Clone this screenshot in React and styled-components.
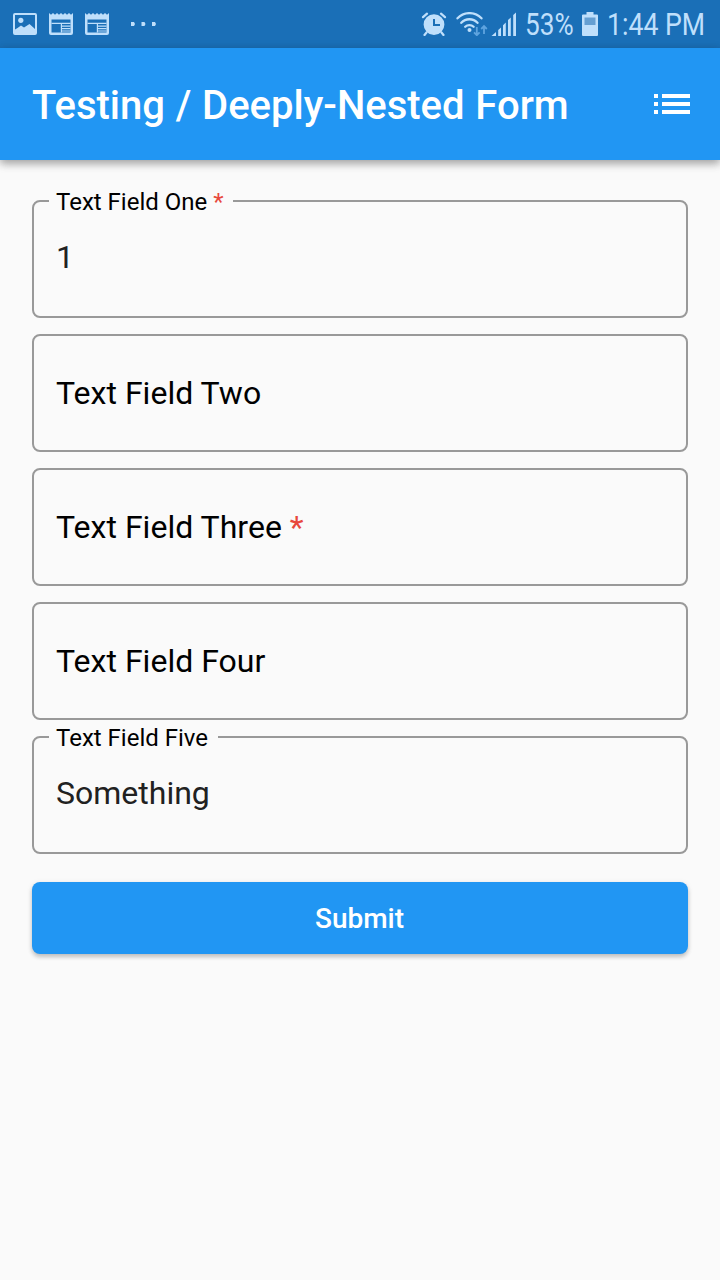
import styled, { createGlobalStyle } from 'styled-components';

const fields = [
  { label: 'Text Field One', required: true, value: '1' },
  { label: 'Text Field Two' },
  { label: 'Text Field Three', required: true },
  { label: 'Text Field Four' },
  { label: 'Text Field Five', value: 'Something' },
];

const PhotoIcon = () => (
  <svg width="24" height="22" viewBox="0 0 24 22">
    <path
      fillRule="evenodd"
      d="M2 0h20a2 2 0 0 1 2 2v18a2 2 0 0 1-2 2H2a2 2 0 0 1-2-2V2a2 2 0 0 1 2-2zM2 2v14.500L4.500 15l3.500-2.500 3 2L16.500 11l5.500 5V2z"
    />
    <circle cx="7.800" cy="7.300" r="2.600" />
  </svg>
);

const NewsIcon = () => (
  <svg width="24" height="22" viewBox="0 0 24 22">
    <path
      fillRule="evenodd"
      d="M0 0l2 1.800 2-1.800 2 1.800 2-1.800 2 1.800 2-1.800 2 1.800 2-1.800 2 1.800 2-1.800 2 1.800 2-1.800v20a2 2 0 0 1-2 2H2a2 2 0 0 1-2-2zM2.500 6.500v13h19v-13z"
    />
    <path d="M2.500 9.800h19v1.200h-19zM11.800 10h1.200v9.500h-1.200zM13 12.600h8.500v1.200H13zM13 15h8.500v1.200H13zM13 17.400h8.500v1.200H13z" />
  </svg>
);

const AlarmIcon = () => (
  <svg width="26" height="24" viewBox="0 0 26 24">
    <path
      fillRule="evenodd"
      d="M13 2.200a10.400 10.400 0 1 1 0 20.800 10.400 10.400 0 0 1 0-20.800zM12 7v7h7v-2h-5V7z"
    />
    <path d="M2 5.200L6 1.700M24 5.200L20 1.700M5.500 20.500L3.500 23M20.500 20.500L22.500 23" stroke="currentColor" strokeWidth="2.200" strokeLinecap="round" />
  </svg>
);

const WifiIcon = () => (
  <svg width="32" height="24" viewBox="0 0 32 24">
    <g fill="none" stroke="currentColor" strokeWidth="2.300" strokeLinecap="round">
      <path d="M1.500 6.300a16.500 16.500 0 0 1 24 0M5.300 10.800a11 11 0 0 1 16.200 0M9.200 14.800a6 6 0 0 1 8.400 0" />
    </g>
    <circle cx="13.500" cy="18" r="2" />
    <g fill="none" stroke="#5fa4df" strokeWidth="1.800">
      <path d="M20.800 15v8M18 20.300l2.800 2.900 2.800-2.900M28 22v-8M25.200 17l2.800-2.900 2.800 2.900" />
    </g>
  </svg>
);

const SignalIcon = () => (
  <svg width="26" height="24" viewBox="0 0 26 24">
    <path d="M.5 24L5 20v4zM7.200 18l2.800-2.600V24H7.200zM12 13.200l2.800-2.600V24H12zM17 8l2.800-2.600V24H17zM22.200 3L25 .4V24h-2.800z" />
  </svg>
);

const BatteryIcon = () => (
  <svg width="16" height="24" viewBox="0 0 16 24">
    <path d="M4.500 0h7v2.500H15a1 1 0 0 1 1 1V23a1 1 0 0 1-1 1H1a1 1 0 0 1-1-1V3.500a1 1 0 0 1 1-1h3.500z" />
    <path d="M2.500 5.500h11V13h-11z" fill="#659fd2" />
  </svg>
);

const DotsIcon = () => (
  <svg width="26" height="4" viewBox="0 0 26 4">
    <path d="M0 0h3l1 2-1 2H0zM10.500 0h3l1 2-1 2h-3zM21 0h3l1 2-1 2h-3z" />
  </svg>
);

const ListIcon = () => (
  <svg width="36" height="20" viewBox="0 0 36 20">
    <path d="M0 0h4v4H0zM8 0h28v4H8zM0 8h4v4H0zM8 8h28v4H8zM0 16h4v4H0zM8 16h28v4H8z" />
  </svg>
);

const Field = ({ label, required, value }) => (
  <FieldBox>
    <Label $floating={!!value}>
      {label}
      {required && <Required> *</Required>}
    </Label>
    {value && <Value>{value}</Value>}
  </FieldBox>
);

export default () => (
  <Screen>
    <GlobalStyle />

    <StatusBar>
      <Notifications>
        <PhotoIcon />
        <NewsIcon />
        <NewsIcon />
        <More><DotsIcon /></More>
      </Notifications>
      <System>
        <AlarmIcon />
        <WifiIcon />
        <SignalIcon />
        <StatusText $width={48} $scale={.845}>53%</StatusText>
        <BatteryIcon />
        <StatusText $width={98} $scale={.86}>1:44 PM</StatusText>
      </System>
    </StatusBar>

    <AppBar>
      <Title>Testing / Deeply-Nested Form</Title>
      <MenuButton aria-label="Menu"><ListIcon /></MenuButton>
    </AppBar>

    <Form>
      {fields.map(field => <Field key={field.label} {...field} />)}
      <Submit type="button">Submit</Submit>
    </Form>
  </Screen>
)

const GlobalStyle = createGlobalStyle`
  * {
    box-sizing: border-box;
  }

  body {
    margin: 0;
    background: #fafafa;
    font-family: Roboto, sans-serif;
  }

  svg {
    display: block;
    flex: none;
    fill: currentColor;
  }
`;

const Screen = styled.div`
  display: flex;
  flex-direction: column;
  min-height: 1280px;
  background: #fafafa;
`;

const StatusBar = styled.div`
  display: flex;
  justify-content: space-between;
  align-items: center;
  height: 48px;
  padding: 0 15px 0 13px;
  background: #1a6fb7;
  color: #bfdffb;
`;

const Notifications = styled.div`
  display: flex;
  align-items: center;
  gap: 12px;
`;

const More = styled.div`
  margin-left: 10px;
`;

const System = styled.div`
  display: flex;
  align-items: center;
  gap: 9px;

  svg:nth-child(2) {
    margin-right: -6px;
  }

  svg:nth-child(3) {
    margin-right: -1px;
  }
`;

/* the system font is condensed, so the glyphs are squeezed into the slot */
const StatusText = styled.span`
  width: ${props => props.$width}px;
  padding-top: 2px;
  font-size: 31px;
  line-height: 46px;
  white-space: nowrap;
  transform: scaleX(${props => props.$scale});
  transform-origin: left center;
`;

const AppBar = styled.header`
  display: flex;
  justify-content: space-between;
  align-items: center;
  height: 112px;
  padding: 0 30px 0 32px;
  background: #2196f3;
  color: #fff;
  box-shadow: 0 4px 8px rgba(0, 0, 0, .26), 0 2px 10px rgba(0, 0, 0, .14);
`;

const Title = styled.h1`
  margin: 0;
  padding-top: 4px;
  font-size: 40px;
  font-weight: 500;
  line-height: 46px;
  word-spacing: .8px;
  white-space: nowrap;
`;

const MenuButton = styled.button`
  padding: 0;
  border: 0;
  background: none;
  color: #fff;
`;

const Form = styled.form`
  display: flex;
  flex-direction: column;
  gap: 16px;
  padding: 40px 32px;
`;

const FieldBox = styled.div`
  position: relative;
  display: flex;
  align-items: center;
  height: 118px;
  padding: 0 22px;
  border: 2px solid #999;
  border-radius: 8px;
`;

const Label = styled.label`
  color: #000;
  font-size: 32px;
  line-height: 38px;
  letter-spacing: .02px;
  white-space: pre;

  ${props => props.$floating && `
    position: absolute;
    top: -14px;
    left: 15px;
    padding: 0 9.500px 0 7px;
    background: #fafafa;
    font-size: 24px;
    line-height: 28px;
    letter-spacing: 0;
  `}
`;

const Required = styled.span`
  color: #e8483c;
`;

const Value = styled.div`
  padding-bottom: 4px;
  color: #212121;
  font-size: 32px;
  line-height: 38px;
`;

const Submit = styled.button`
  height: 72px;
  margin-top: 12px;
  padding: 0 1px 0 0;
  border: 0;
  border-radius: 8px;
  background: #2196f3;
  color: #fff;
  font-family: inherit;
  font-size: 28px;
  font-weight: 500;
  box-shadow: 0 3px 4px rgba(0, 0, 0, .2), 0 1px 6px rgba(0, 0, 0, .08);
`;
